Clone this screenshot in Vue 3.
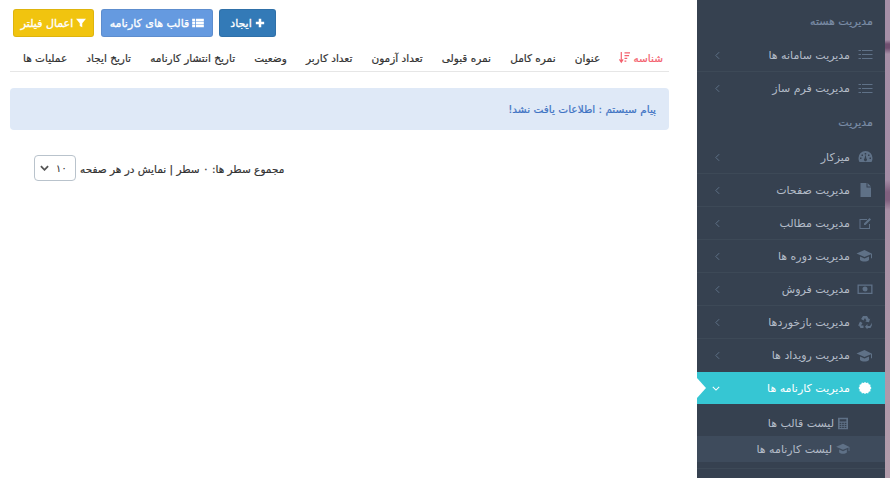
<template>
  <div class="page">
    <main class="content">
      <div class="toolbar">
        <button class="btn yellow" type="button">
          <svg class="ic" viewBox="0 0 12 12"><path d="M0 1h12L7.500 6.200V11L4.500 9.500V6.200z" fill="currentColor" /></svg>
          اعمال فیلتر
        </button>
        <button class="btn sky" type="button">
          <svg class="ic wide" viewBox="0 0 14 12"><path d="M0 1h3.500v2.800H0zM4.500 1H14v2.800H4.500zM0 4.600h3.500v2.800H0zM4.500 4.600H14v2.800H4.500zM0 8.200h3.500V11H0zM4.500 8.200H14V11H4.500z" fill="currentColor" /></svg>
          قالب های کارنامه
        </button>
        <button class="btn navy" type="button">
          <svg class="ic" viewBox="0 0 12 12"><path d="M4.500 1h3v3.500H11v3H7.500V11h-3V7.500H1v-3h3.500z" fill="currentColor" /></svg>
          ایجاد
        </button>
      </div>

      <div class="thead">
        <span class="th sorted">
          شناسه
          <svg class="sort" viewBox="0 0 12 14"><path d="M2.500 1v10M.5 9l2 3 2-3M6 2h6M6 5h5M6 8h3M6 11h2" fill="none" stroke="currentColor" stroke-width="1.300" /></svg>
        </span>
        <span v-for="col in columns" :key="col" class="th">{{ col }}</span>
      </div>

      <div class="alert">پیام سیستم : اطلاعات یافت نشد!</div>

      <div class="pager">
        <div class="select">
          <svg class="chev" viewBox="0 0 10 6"><path d="M1 1l4 4 4-4" fill="none" stroke="currentColor" stroke-width="2" /></svg>
          <span>۱۰</span>
        </div>
        <span class="pager-text">مجموع سطر ها: ۰ سطر | نمایش در هر صفحه</span>
      </div>
    </main>

    <aside class="sidebar">
      <div class="heading first">مدیریت هسته</div>
      <a v-for="item in coreItems" :key="item.title" class="item">
        <svg class="item-icon" viewBox="0 0 16 14" v-html="item.icon"></svg>
        <span class="label">{{ item.title }}</span>
        <svg class="arrow" viewBox="0 0 6 10"><path d="M5 1L1 5l4 4" fill="none" stroke="currentColor" stroke-width="1.200" /></svg>
      </a>
      <div class="heading">مدیریت</div>
      <a v-for="item in menuItems" :key="item.title" class="item">
        <svg class="item-icon" viewBox="0 0 16 14" v-html="item.icon"></svg>
        <span class="label">{{ item.title }}</span>
        <svg class="arrow" viewBox="0 0 6 10"><path d="M5 1L1 5l4 4" fill="none" stroke="currentColor" stroke-width="1.200" /></svg>
      </a>
      <a class="item active">
        <svg class="item-icon" viewBox="0 0 16 14"><path d="M8.500 1l1.400 1 1.700-.4.700 1.600 1.700.6-.2 1.700L15 7l-1.200 1.500.2 1.700-1.700.6-.7 1.600-1.700-.4L8.500 13l-1.400-1-1.700.4-.7-1.600-1.700-.6.2-1.700L2 7l1.200-1.500L3 3.800l1.700-.6.7-1.600 1.700.4z" fill="currentColor" /></svg>
        <span class="label">مدیریت کارنامه ها</span>
        <svg class="arrow open" viewBox="0 0 10 6"><path d="M1 1l4 4 4-4" fill="none" stroke="currentColor" stroke-width="1.300" /></svg>
      </a>
      <div class="submenu">
        <a class="sub">
          <svg class="sub-icon" viewBox="0 0 12 14"><path d="M0 0h12v14H0zM2 2v2.500h8V2zM2 6v1.500h2V6zM5 6v1.500h2V6zM8 6v1.500h2V6zM2 8.500V10h2V8.500zM5 8.500V10h2V8.500zM8 8.500V10h2V8.500zM2 11v1.500h2V11zM5 11v1.500h2V11zM8 11v1.500h2V11z" fill="currentColor" fill-rule="evenodd" /></svg>
          <span>لیست قالب ها</span>
        </a>
        <a class="sub current">
          <svg class="sub-icon cap" viewBox="0 0 16 14" v-html="capIcon"></svg>
          <span>لیست کارنامه ها</span>
        </a>
      </div>
      <a class="item next">
        <svg class="item-icon" viewBox="0 0 16 14" v-html="capIcon"></svg>
      </a>
    </aside>

    <div class="backdrop"></div>
  </div>
</template>

<script setup>
const columns = [
  'عنوان',
  'نمره کامل',
  'نمره قبولی',
  'تعداد آزمون',
  'تعداد کاربر',
  'وضعیت',
  'تاریخ انتشار کارنامه',
  'تاریخ ایجاد',
  'عملیات ها',
]

const listIcon = '<path d="M2 2h2.500v1.100H2zM2 6h2.500v1.100H2zM2 10h2.500v1.100H2zM5.500 2H16v1H5.500zM5.500 6H16v1H5.500zM5.500 10H16v1H5.500z" fill="currentColor"/>'
const capIcon = '<path d="M8 1L0 4.500 8 8l6.500-2.800v4h1v-4.500zM3.500 7.500V11c2 2 7 2 9 0V7.500L8 9.500z" fill="currentColor"/>'

const coreItems = [
  { title: 'مدیریت سامانه ها', icon: listIcon },
  { title: 'مدیریت فرم ساز', icon: listIcon },
]

const menuItems = [
  { title: 'میزکار', icon: '<path d="M9 1a7 7 0 0 0-7 7c0 1.600.4 3 1 4h12c.6-1 1-2.400 1-4a7 7 0 0 0-7-7zM5 4.500h1.500V6H5zM8.200 3h1.500v1.500H8.200zM11.500 4.500H13V6h-1.500zM3.500 7.500H5V9H3.500zM13 7.500h1.500V9H13zM8 8.500l1-4 .9 4a1.500 1.500 0 1 1-1.900 0z" fill="currentColor" fill-rule="evenodd"/>' },
  { title: 'مدیریت صفحات', icon: '<path d="M4 0h6v4.500h4.500V14H4zM11 0l3.500 3.500H11z" fill="currentColor"/>' },
  { title: 'مدیریت مطالب', icon: '<path d="M3 3h7.500v1H4v8h8.500V8h1v5H3zM7.500 7.500L13 2l1.500 1.500L9 9H7.500z" fill="currentColor"/>' },
  { title: 'مدیریت دوره ها', icon: capIcon },
  { title: 'مدیریت فروش', icon: '<path d="M1 2.500h15v9.500H1zM2.300 3.800v7h12.400v-7zM8.500 4.500a2.500 2.500 0 1 1 0 5 2.500 2.500 0 0 1 0-5z" fill="currentColor" fill-rule="evenodd"/>' },
  { title: 'مدیریت بازخوردها', icon: '<path d="M6.500 1h4l2 3.200 1.200-.7-1.200 3.800-3.800-.8 1.200-.7L8.500 3 7 5.500 4.600 4zM3.500 6.500l2.500 1.500-1.500 2.500H7V13H4L2.500 10.500 1.500 11zM14.500 7.500l1 2.500-1.500 3h-3v1.500l-2.500-2.800 2.500-2.700V11h2.500l1-1.800z" fill="currentColor"/>' },
  { title: 'مدیریت رویداد ها', icon: capIcon },
]
</script>

<style scoped>
.page {
  display: flex;
  height: 478px;
  overflow: hidden;
  font-family: "DejaVu Sans", sans-serif;
  background: #fff;
}

.content {
  width: 697px;
  flex: none;
  padding: 9px 28px 0 10px;
  box-sizing: border-box;
}

.toolbar {
  display: flex;
  gap: 6px;
  padding-left: 3px;
}

.btn {
  display: flex;
  align-items: center;
  justify-content: center;
  gap: 3px;
  direction: rtl;
  height: 28px;
  border: 1px solid rgba(0, 0, 0, 0.08);
  border-radius: 3px;
  color: #fff;
  font: 11px "DejaVu Sans", sans-serif;
  -webkit-text-stroke: 0.3px #fff;
}

.yellow {
  width: 81px;
  margin-right: 1px;
  background: #f1c40f;
}

.sky {
  width: 112px;
  background: #659ae0;
}

.navy {
  width: 57px;
  background: #337ab7;
}

.ic {
  width: 10px;
  height: 10px;
}

.ic.wide {
  width: 12px;
}

.thead {
  display: flex;
  direction: rtl;
  justify-content: space-between;
  align-items: center;
  height: 27px;
  margin-top: 7px;
  padding: 0 6px 0 13px;
  border-bottom: 1px solid #e6e6e6;
}

.th {
  display: flex;
  align-items: center;
  gap: 3px;
  font-size: 10.500px;
  color: #333;
  -webkit-text-stroke: 0.2px currentColor;
  white-space: nowrap;
}

.sorted {
  color: #f4616e;
}

.sort {
  width: 11px;
  height: 13px;
}

.alert {
  direction: rtl;
  margin-top: 16px;
  height: 42px;
  line-height: 42px;
  padding: 0 13px;
  border-radius: 4px;
  background: #dfe9f7;
  color: #3f74c4;
  font-size: 10.500px;
  -webkit-text-stroke: 0.2px currentColor;
}

.pager {
  display: flex;
  align-items: center;
  gap: 4px;
  margin-top: 26px;
  padding-left: 24px;
  font-size: 10.500px;
  color: #333;
}

.pager-text {
  direction: rtl;
  -webkit-text-stroke: 0.2px currentColor;
}

.select {
  display: flex;
  align-items: center;
  justify-content: space-between;
  width: 42px;
  height: 26px;
  margin-top: -1px;
  padding: 0 8px 0 5px;
  box-sizing: border-box;
  border: 1px solid #b9c3cc;
  border-radius: 4px;
}

.chev {
  width: 9px;
  height: 6px;
  color: #555;
}

.sidebar {
  width: 188px;
  flex: none;
  height: 478px;
  overflow: hidden;
  background: #364150;
  direction: rtl;
  font-size: 11px;
  color: #b4bcc8;
}

.heading {
  height: 36px;
  line-height: 36px;
  padding-right: 12px;
  color: #7a8ca5;
  -webkit-text-stroke: 0.2px currentColor;
}

.heading.first {
  height: 39px;
  line-height: 44px;
}

.item {
  display: flex;
  align-items: center;
  height: 33px;
  box-sizing: border-box;
  padding-right: 12px;
  border-bottom: 1px solid #3d4957;
  position: relative;
}

.item:has(+ .heading),
.item:has(+ .active) {
  border-bottom: 0;
}

.item-icon {
  width: 17px;
  height: 14px;
  margin-left: 6px;
  color: #5f7187;
  flex: none;
}

.label {
  flex: 1;
}

.arrow {
  width: 5px;
  height: 9px;
  margin-left: 18px;
  color: #5f7187;
}

.item.active {
  height: 32px;
  border-bottom: 0;
  background: #36c6d3;
  color: #fff;
}

.item.active .item-icon,
.item.active .arrow {
  color: #fff;
}

.arrow.open {
  width: 8px;
  height: 5px;
  margin-left: 15px;
}

.item.active::after {
  content: "";
  position: absolute;
  left: 0;
  top: 6px;
  border-style: solid;
  border-width: 10px 0 10px 9px;
  border-color: transparent transparent transparent #fff;
}

.submenu {
  padding: 6px 0;
}

.sub {
  display: flex;
  align-items: center;
  gap: 4px;
  height: 26px;
  padding-right: 37px;
}

.sub.current {
  background: #3e4b5c;
  padding-right: 35px;
}

.sub-icon {
  width: 10px;
  height: 13px;
  color: #5f7187;
  flex: none;
}

.sub-icon.cap {
  width: 14px;
  height: 12px;
}

.item.next {
  border-top: 1px solid #3d4957;
  border-bottom: 0;
}

.backdrop {
  flex: 1;
  background: linear-gradient(180deg, #a68fa7 0, #a68fa7 40px, #6f4f70 44px, #6f4f70 48px, #a68fa7 54px, #a48ca6 180px, #80607f 192px, #80607f 200px, #a88fa6 210px, #b29cab 478px);
}
</style>

<style>
body {
  margin: 0;
  background: #fff;
}
</style>
